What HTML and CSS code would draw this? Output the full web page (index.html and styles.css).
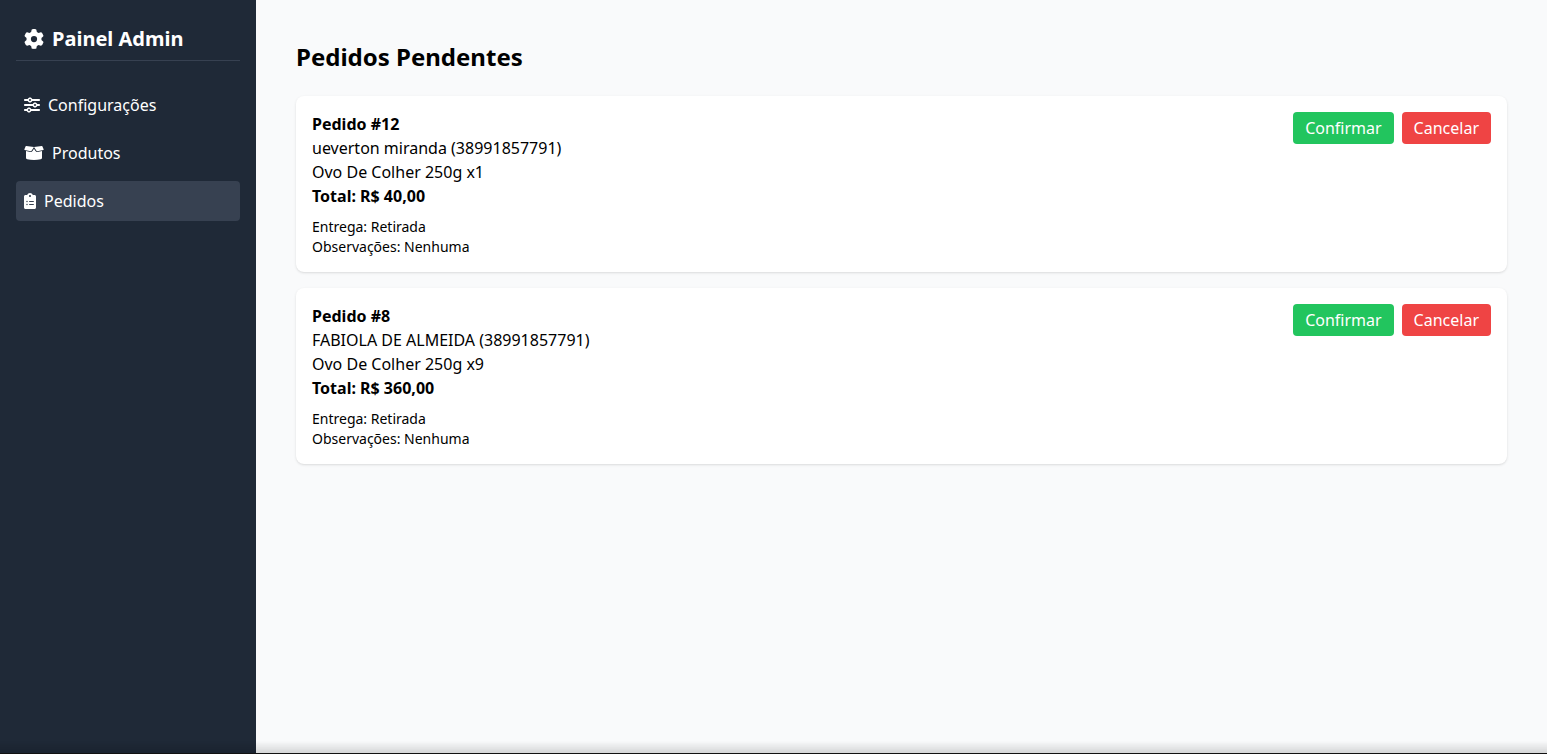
FILE: index.html
```html
<!DOCTYPE html>
<html lang="pt-BR">
	<head>
		<meta charset="UTF-8">
		<meta name="viewport" content="width=device-width, initial-scale=1">
		<title>Painel Admin</title>
		<link rel="stylesheet" href="styles.css">
	</head>
	<body>
		<aside class="sidebar">
			<div class="brand">
				<svg class="icon-gear" viewBox="0 0 512 512"><path d="M495.9 166.6c3.2 8.7 .5 18.4-6.4 24.6l-43.3 39.4c1.1 8.3 1.7 16.8 1.7 25.4s-.6 17.1-1.7 25.4l43.3 39.4c6.9 6.2 9.6 15.9 6.4 24.6c-4.4 11.9-9.7 23.3-15.8 34.3l-4.7 8.1c-6.6 11-14 21.4-22.1 31.2c-5.9 7.2-15.7 9.6-24.5 6.8l-55.7-17.7c-13.4 10.3-28.2 18.9-44 25.4l-12.5 57.1c-2 9.1-9 16.3-18.2 17.8c-13.8 2.3-28 3.5-42.5 3.5s-28.7-1.2-42.5-3.5c-9.2-1.5-16.2-8.7-18.2-17.8l-12.5-57.1c-15.8-6.5-30.6-15.1-44-25.4L83.1 425.9c-8.8 2.8-18.6 .3-24.5-6.8c-8.1-9.8-15.5-20.2-22.1-31.2l-4.7-8.1c-6.1-11-11.4-22.4-15.8-34.3c-3.2-8.7-.5-18.4 6.4-24.6l43.3-39.4C64.6 273.1 64 264.6 64 256s.6-17.1 1.7-25.4L22.4 191.2c-6.9-6.2-9.6-15.9-6.4-24.6c4.4-11.9 9.7-23.3 15.8-34.3l4.7-8.1c6.6-11 14-21.4 22.1-31.2c5.9-7.2 15.7-9.6 24.5-6.8l55.7 17.7c13.4-10.3 28.2-18.9 44-25.4l12.5-57.1c2-9.1 9-16.3 18.2-17.8C227.3 1.2 241.5 0 256 0s28.7 1.2 42.5 3.5c9.2 1.5 16.2 8.7 18.2 17.8l12.5 57.1c15.8 6.5 30.6 15.1 44 25.4l55.7-17.7c8.8-2.8 18.6-.3 24.5 6.8c8.1 9.8 15.5 20.2 22.1 31.2l4.7 8.1c6.1 11 11.4 22.4 15.8 34.3zM256 336a80 80 0 1 0 0-160 80 80 0 1 0 0 160z"/></svg>
				<span>Painel Admin</span>
			</div>
			<nav class="menu">
				<a class="menu-item" href="#configuracoes">
					<svg class="icon-sliders" viewBox="0 0 512 512"><path d="M0 416c0 17.7 14.3 32 32 32l54.7 0c12.3 28.3 40.5 48 73.3 48s61-19.7 73.3-48L480 448c17.7 0 32-14.3 32-32s-14.3-32-32-32l-246.7 0c-12.3-28.3-40.5-48-73.3-48s-61 19.7-73.3 48L32 384c-17.7 0-32 14.3-32 32zm128 0a32 32 0 1 1 64 0 32 32 0 1 1 -64 0zM320 256a32 32 0 1 1 64 0 32 32 0 1 1 -64 0zm32-80c-32.8 0-61 19.7-73.3 48L32 224c-17.7 0-32 14.3-32 32s14.3 32 32 32l246.7 0c12.3 28.3 40.5 48 73.3 48s61-19.7 73.3-48l54.7 0c17.7 0 32-14.3 32-32s-14.3-32-32-32l-54.7 0c-12.3-28.3-40.5-48-73.3-48zM192 128a32 32 0 1 1 0-64 32 32 0 1 1 0 64zm73.3-64C253 35.7 224.8 16 192 16s-61 19.7-73.3 48L32 64C14.3 64 0 78.3 0 96s14.3 32 32 32l86.7 0c12.3 28.3 40.5 48 73.3 48s61-19.7 73.3-48L480 128c17.7 0 32-14.3 32-32s-14.3-32-32-32L265.3 64z"/></svg>
					<span>Configurações</span>
				</a>
				<a class="menu-item" href="#produtos">
					<svg class="icon-box" viewBox="0 0 640 512"><path d="M54 42c3-7 10-10 17-9l249 31-78 120c-8 12-20 16-34 12L24 157c-12-4-17-14-12-25L54 42zM586 42c-3-7-10-10-17-9L320 64l78 120c8 12 20 16 34 12l184-39c12-4 17-14 12-25L586 42zM320 116l48 78c14 24 40 36 68 30l140-30v210c0 26-14 44-40 51-66 17-140 25-216 25s-150-8-216-25c-26-7-40-25-40-51V194l140 30c28 6 54-6 68-30l48-78z"/></svg>
					<span>Produtos</span>
				</a>
				<a class="menu-item active" href="#pedidos">
					<svg class="icon-clipboard" viewBox="0 0 384 512"><path d="M336 64h-53.88C268.9 26.8 233.7 0 192 0S115.1 26.8 101.9 64H48C21.5 64 0 85.48 0 112v352C0 490.5 21.5 512 48 512h288c26.5 0 48-21.48 48-48v-352C384 85.48 362.5 64 336 64zM96 392c-13.25 0-24-10.75-24-24S82.75 344 96 344s24 10.75 24 24S109.3 392 96 392zM96 296c-13.25 0-24-10.75-24-24S82.75 248 96 248S120 258.8 120 272S109.3 296 96 296zM192 64c17.67 0 32 14.33 32 32c0 17.67-14.33 32-32 32S160 113.7 160 96C160 78.33 174.3 64 192 64zM304 384h-128C167.2 384 160 376.8 160 368C160 359.2 167.2 352 176 352h128c8.801 0 16 7.199 16 16C320 376.8 312.8 384 304 384zM304 288h-128C167.2 288 160 280.8 160 272C160 263.2 167.2 256 176 256h128C312.8 256 320 263.2 320 272C320 280.8 312.8 288 304 288z"/></svg>
					<span>Pedidos</span>
				</a>
			</nav>
		</aside>
		<main class="content">
			<h1>Pedidos Pendentes</h1>
			<div class="orders">
				<section class="order">
					<div class="order-info">
						<h2>Pedido #12</h2>
						<p>ueverton miranda (38991857791)</p>
						<p>Ovo De Colher 250g x1</p>
						<p class="total">Total: R$ 40,00</p>
						<div class="details">
							<p>Entrega: Retirada</p>
							<p>Observações: Nenhuma</p>
						</div>
					</div>
					<div class="actions">
						<button type="button" class="btn confirm">Confirmar</button>
						<button type="button" class="btn cancel">Cancelar</button>
					</div>
				</section>
				<section class="order">
					<div class="order-info">
						<h2>Pedido #8</h2>
						<p>FABIOLA DE ALMEIDA (38991857791)</p>
						<p>Ovo De Colher 250g x9</p>
						<p class="total">Total: R$ 360,00</p>
						<div class="details">
							<p>Entrega: Retirada</p>
							<p>Observações: Nenhuma</p>
						</div>
					</div>
					<div class="actions">
						<button type="button" class="btn confirm">Confirmar</button>
						<button type="button" class="btn cancel">Cancelar</button>
					</div>
				</section>
			</div>
		</main>
		<div class="bottom-edge"></div>
	</body>
</html>
```
FILE: styles.css
```css
*{
	margin: 0;
	padding: 0;
	box-sizing: border-box;
}
body{
	display: flex;
	min-height: 100vh;
	background-color: #f9fafb;
	color: #000;
	font: 16px/24px "Noto Sans", sans-serif;
}
svg{
	display: block;
	flex-shrink: 0;
	height: 16px;
	fill: currentColor;
}

/* menu lateral */
.sidebar{
	width: 256px;
	flex-shrink: 0;
	padding: 24px 16px;
	background-color: #1f2937;
	color: #fff;
}
.brand{
	display: flex;
	align-items: center;
	gap: 8px;
	padding: 0 8px 7px;
	margin-bottom: 24px;
	border-bottom: 1px solid #374151;
	font-size: 20px;
	line-height: 29px;
	font-weight: bold;
}
.menu{
	display: flex;
	flex-direction: column;
	gap: 8px;
}
.menu-item{
	display: flex;
	align-items: center;
	gap: 8px;
	padding: 8px;
	border-radius: 4px;
	color: #fff;
	text-decoration: none;
}
.menu-item:hover,
.menu-item.active{
	background-color: #374151;
}
.icon-gear{
	width: 20px;
	height: 20px;
}
.icon-sliders{
	width: 16px;
}
.icon-box{
	width: 20px;
}
.icon-clipboard{
	width: 12px;
}

/* pedidos */
.content{
	flex: 1;
	min-width: 0;
	padding: 40px;
}
h1{
	margin-bottom: 22px;
	font-size: 24px;
	line-height: 34px;
}
h2{
	font-size: 16px;
}
.orders{
	display: flex;
	flex-direction: column;
	gap: 16px;
}
.order{
	display: flex;
	justify-content: space-between;
	align-items: flex-start;
	gap: 16px;
	padding: 16px 16px 15px;
	border-radius: 8px;
	background-color: #fff;
	box-shadow: 0 1px 3px rgba(0,0,0,0.1), 0 1px 2px -1px rgba(0,0,0,0.1);
}
.total{
	font-weight: bold;
}
.details{
	margin-top: 9px;
	font-size: 14px;
	line-height: 20px;
}
.actions{
	display: flex;
	gap: 8px;
}
.btn{
	padding: 4px 12px;
	border: 0;
	border-radius: 4px;
	color: #fff;
	font: inherit;
	cursor: pointer;
}
.confirm{
	background-color: #22c55e;
}
.cancel{
	background-color: #ef4444;
}

/* sombra no rodapé da janela */
.bottom-edge{
	position: fixed;
	left: 0;
	right: 0;
	bottom: 0;
	height: 13px;
	border-bottom: 1px solid #111;
	background: linear-gradient(rgba(0,0,0,0), rgba(0,0,0,0.14));
	pointer-events: none;
}
```
